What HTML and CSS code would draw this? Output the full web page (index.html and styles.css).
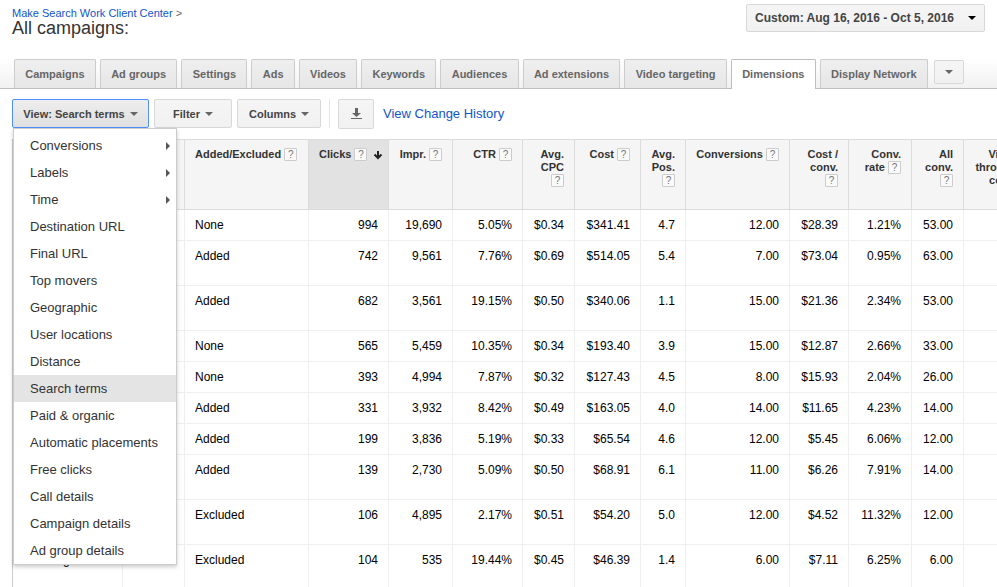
FILE: index.html
```
<!DOCTYPE html>
<html lang="en">
<head>
  <meta charset="UTF-8">
  <meta name="viewport" content="width=device-width, initial-scale=1.0">
  <title>All campaigns</title>
  <link rel="stylesheet" href="styles.css">
</head>
<body>
  <header class="page-header">
    <div class="heading">
      <div class="breadcrumb"><a href="#">Make Search Work Client Center</a> &gt;</div>
      <h1>All campaigns:</h1>
    </div>
    <button type="button" class="btn date-range">Custom: Aug 16, 2016 - Oct 5, 2016 <span class="caret caret-dark"></span></button>
  </header>

  <nav class="tabs">
    <a class="tab" href="#">Campaigns</a>
    <a class="tab" href="#">Ad groups</a>
    <a class="tab" href="#">Settings</a>
    <a class="tab" href="#">Ads</a>
    <a class="tab" href="#">Videos</a>
    <a class="tab" href="#">Keywords</a>
    <a class="tab" href="#">Audiences</a>
    <a class="tab" href="#">Ad extensions</a>
    <a class="tab" href="#">Video targeting</a>
    <a class="tab active" href="#">Dimensions</a>
    <a class="tab" href="#">Display Network</a>
    <button type="button" class="btn tab-more" aria-label="More tabs"><span class="caret"></span></button>
  </nav>

  <div class="toolbar">
    <div class="dropdown">
      <button type="button" class="btn btn-open" aria-expanded="true">View: Search terms <span class="caret"></span></button>
      <ul class="menu">
        <li><a class="has-sub" href="#">Conversions</a></li>
        <li><a class="has-sub" href="#">Labels</a></li>
        <li><a class="has-sub" href="#">Time</a></li>
        <li><a href="#">Destination URL</a></li>
        <li><a href="#">Final URL</a></li>
        <li><a href="#">Top movers</a></li>
        <li><a href="#">Geographic</a></li>
        <li><a href="#">User locations</a></li>
        <li><a href="#">Distance</a></li>
        <li><a class="selected" href="#">Search terms</a></li>
        <li><a href="#">Paid &amp; organic</a></li>
        <li><a href="#">Automatic placements</a></li>
        <li><a href="#">Free clicks</a></li>
        <li><a href="#">Call details</a></li>
        <li><a href="#">Campaign details</a></li>
        <li><a href="#">Ad group details</a></li>
      </ul>
    </div>
    <button type="button" class="btn btn-filter">Filter <span class="caret"></span></button>
    <button type="button" class="btn btn-columns">Columns <span class="caret"></span></button>
    <span class="divider"></span>
    <button type="button" class="btn btn-download" aria-label="Download">
      <svg width="11" height="11" viewBox="0 0 11 11" fill="#666"><path d="M4 0h3v5h3L5.500 9 1 5h3z"/><path d="M0 10h11v1H0z"/></svg>
    </button>
    <a class="history" href="#">View Change History</a>
  </div>

  <div class="table-wrap">
    <table>
      <colgroup>
        <col class="c-term"><col class="c-match"><col class="c-added"><col class="c-clicks"><col class="c-impr"><col class="c-ctr"><col class="c-cpc"><col class="c-cost"><col class="c-pos"><col class="c-convs"><col class="c-cpa"><col class="c-rate"><col class="c-all"><col class="c-view">
      </colgroup>
      <thead>
        <tr>
          <th></th>
          <th></th>
          <th class="left">Added/Excluded <span class="help">?</span></th>
          <th class="sorted">Clicks <span class="help">?</span><svg class="arrow" width="10" height="10" viewBox="0 0 10 10" fill="none" stroke="#222" stroke-width="2"><path d="M5 1v7M1.500 4.500 5 8l3.500-3.500"/></svg></th>
          <th>Impr. <span class="help">?</span></th>
          <th>CTR <span class="help">?</span></th>
          <th>Avg. CPC <span class="help">?</span></th>
          <th>Cost <span class="help">?</span></th>
          <th>Avg. Pos. <span class="help">?</span></th>
          <th>Conversions <span class="help">?</span></th>
          <th>Cost / conv. <span class="help">?</span></th>
          <th>Conv. rate <span class="help">?</span></th>
          <th>All<br>conv. <span class="help">?</span></th>
          <th>View-<br>through<br>conv.</th>
        </tr>
      </thead>
      <tbody>
        <tr><td></td><td></td><td class="left">None</td><td>994</td><td>19,690</td><td>5.05%</td><td>$0.34</td><td>$341.41</td><td>4.7</td><td>12.00</td><td>$28.39</td><td>1.21%</td><td>53.00</td><td></td></tr>
        <tr class="tall"><td></td><td></td><td class="left">Added</td><td>742</td><td>9,561</td><td>7.76%</td><td>$0.69</td><td>$514.05</td><td>5.4</td><td>7.00</td><td>$73.04</td><td>0.95%</td><td>63.00</td><td></td></tr>
        <tr class="tall"><td></td><td></td><td class="left">Added</td><td>682</td><td>3,561</td><td>19.15%</td><td>$0.50</td><td>$340.06</td><td>1.1</td><td>15.00</td><td>$21.36</td><td>2.34%</td><td>53.00</td><td></td></tr>
        <tr><td></td><td></td><td class="left">None</td><td>565</td><td>5,459</td><td>10.35%</td><td>$0.34</td><td>$193.40</td><td>3.9</td><td>15.00</td><td>$12.87</td><td>2.66%</td><td>33.00</td><td></td></tr>
        <tr><td></td><td></td><td class="left">None</td><td>393</td><td>4,994</td><td>7.87%</td><td>$0.32</td><td>$127.43</td><td>4.5</td><td>8.00</td><td>$15.93</td><td>2.04%</td><td>26.00</td><td></td></tr>
        <tr><td></td><td></td><td class="left">Added</td><td>331</td><td>3,932</td><td>8.42%</td><td>$0.49</td><td>$163.05</td><td>4.0</td><td>14.00</td><td>$11.65</td><td>4.23%</td><td>14.00</td><td></td></tr>
        <tr><td></td><td></td><td class="left">Added</td><td>199</td><td>3,836</td><td>5.19%</td><td>$0.33</td><td>$65.54</td><td>4.6</td><td>12.00</td><td>$5.45</td><td>6.06%</td><td>12.00</td><td></td></tr>
        <tr class="tall"><td></td><td></td><td class="left">Added</td><td>139</td><td>2,730</td><td>5.09%</td><td>$0.50</td><td>$68.91</td><td>6.1</td><td>11.00</td><td>$6.26</td><td>7.91%</td><td>14.00</td><td></td></tr>
        <tr class="tall"><td></td><td></td><td class="left">Excluded</td><td>106</td><td>4,895</td><td>2.17%</td><td>$0.51</td><td>$54.20</td><td>5.0</td><td>12.00</td><td>$4.52</td><td>11.32%</td><td>12.00</td><td></td></tr>
        <tr class="tall"><td class="left">branding</td><td></td><td class="left">Excluded</td><td>104</td><td>535</td><td>19.44%</td><td>$0.45</td><td>$46.39</td><td>1.4</td><td>6.00</td><td>$7.11</td><td>6.25%</td><td>6.00</td><td></td></tr>
      </tbody>
    </table>
  </div>
</body>
</html>
```
FILE: styles.css
```
* {
  box-sizing: border-box;
}
body {
  margin: 0;
  font-family: Arial, "Liberation Sans", sans-serif;
  font-size: 12px;
  color: #000;
  background: #fff;
  overflow: hidden;
}
a {
  color: #15c;
  text-decoration: none;
}

/* header */
.page-header {
  display: flex;
  justify-content: space-between;
  align-items: flex-start;
  height: 58px;
  padding: 4px 12px 0;
}
.breadcrumb {
  padding-top: 3px;
  font-size: 11px;
  line-height: 12px;
  color: #666;
}
h1 {
  margin: 0;
  font-size: 18px;
  font-weight: normal;
  line-height: 18px;
  color: #333;
}

/* buttons */
.btn {
  display: flex;
  align-items: center;
  justify-content: center;
  gap: 5px;
  height: 29px;
  padding: 0 11px;
  border: 1px solid #d8d8d8;
  border-radius: 2px;
  background: linear-gradient(#f5f5f5, #f1f1f1);
  font-family: inherit;
  font-size: 11px;
  font-weight: bold;
  color: #444;
  white-space: nowrap;
  cursor: pointer;
}
.caret {
  border: 4px solid transparent;
  border-top-color: #666;
  border-bottom: 0;
}
.caret-dark {
  border-top-color: #000;
}
.date-range {
  gap: 14px;
  height: 28px;
  padding: 0 8px;
  font-size: 12px;
}

/* tabs */
.tabs {
  display: flex;
  align-items: flex-end;
  gap: 4px;
  height: 31px;
  padding: 0 33px 0 14px;
  border-bottom: 1px solid #bebebe;
  background: linear-gradient(#fff, #f1f1f1);
}
.tab {
  flex: 1 0 auto;
  height: 29px;
  padding: 0 10px;
  border: 1px solid #ccc;
  border-bottom: 0;
  border-radius: 2px 2px 0 0;
  background: linear-gradient(#efefef, #e6e6e6);
  font-size: 11px;
  font-weight: bold;
  line-height: 29px;
  text-align: center;
  color: #666;
  white-space: nowrap;
}
.tab.active {
  height: 30px;
  margin-bottom: -1px;
  background: #fff;
  border-color: #bebebe;
}
.tab-more {
  width: 30px;
  height: 24px;
  margin: 0 0 4px 2px;
}

/* toolbar */
.toolbar {
  display: flex;
  align-items: center;
  height: 49px;
  padding-left: 12px;
}
.dropdown {
  position: relative;
}
.btn-open {
  width: 137px;
  border-color: #4d90fe;
  background: linear-gradient(#eee, #e0e0e0);
}
.btn-filter {
  width: 78px;
  margin: 0 5px;
}
.btn-columns {
  width: 84px;
}
.divider {
  width: 1px;
  height: 29px;
  margin: 0 8px;
  background: #e5e5e5;
}
.btn-download {
  width: 36px;
  height: 30px;
}
.history {
  margin-left: 9px;
  font-size: 13px;
}
.menu {
  position: absolute;
  z-index: 1;
  top: 100%;
  left: 1px;
  width: 164px;
  margin: 0;
  padding: 3px 0 0;
  border: 1px solid #ccc;
  background: #fff;
  box-shadow: 0 2px 4px rgba(0, 0, 0, 0.2);
  list-style: none;
}
.menu a {
  display: flex;
  align-items: center;
  justify-content: space-between;
  height: 27px;
  padding: 0 6px 0 16px;
  font-size: 13px;
  color: #333;
}
.menu .selected {
  background: #e4e4e4;
}
.has-sub::after {
  content: "";
  border: 4px solid transparent;
  border-left-color: #555;
  border-right: 0;
}

/* table */
.table-wrap {
  margin: 1px 0 0 12px;
  overflow: hidden;
}
table {
  width: 1016px;
  border-collapse: separate;
  border-spacing: 0;
  table-layout: fixed;
  border-left: 1px solid #ccc;
}
th {
  height: 71px;
  padding: 8px 10px;
  border: solid #dcdcdc;
  border-width: 1px 1px 1px 0;
  background: #f5f5f5;
  font-size: 11px;
  line-height: 13px;
  text-align: right;
  vertical-align: top;
  color: #333;
}
th.sorted {
  padding-right: 5px;
  background: #e2e2e2;
  white-space: nowrap;
}
td {
  height: 31px;
  padding: 8px 10px;
  border: solid #efefef;
  border-width: 0 1px 1px 0;
  line-height: 14px;
  text-align: right;
  vertical-align: top;
}
.tall td {
  height: 45px;
}
th.left,
td.left {
  text-align: left;
}
.help {
  display: inline-block;
  width: 13px;
  height: 13px;
  border: 1px solid #ccc;
  border-radius: 1px;
  background: #fafafa;
  font-size: 10px;
  font-weight: normal;
  line-height: 11px;
  text-align: center;
  vertical-align: top;
  color: #777;
}
.arrow {
  margin-left: 6px;
  vertical-align: -2px;
}
.c-term { width: 110px; }
.c-match { width: 62px; }
.c-added { width: 124px; }
.c-clicks { width: 80px; }
.c-impr { width: 64px; }
.c-ctr { width: 70px; }
.c-cpc { width: 52px; }
.c-cost { width: 66px; }
.c-pos { width: 45px; }
.c-convs { width: 104px; }
.c-cpa { width: 59px; }
.c-rate { width: 63px; }
.c-all { width: 52px; }
.c-view { width: 64px; }
```
